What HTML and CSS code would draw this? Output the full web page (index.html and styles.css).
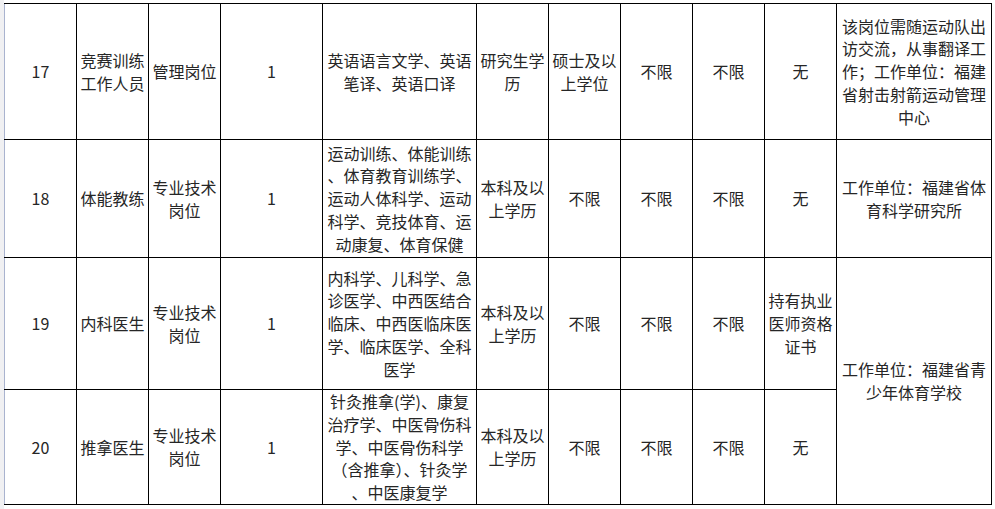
FILE: index.html
```html
<!DOCTYPE html>
<html lang="zh-CN">
<head>
<meta charset="utf-8">
<title>岗位表</title>
<link rel="stylesheet" href="styles.css">
</head>
<body>
<div class="page">
  <div class="gutter"></div>
  <table class="jobs">
    <colgroup>
      <col class="c-num"><col class="c-name"><col class="c-type"><col class="c-count">
      <col class="c-major"><col class="c-edu"><col class="c-deg"><col class="c-a">
      <col class="c-b"><col class="c-c"><col class="c-note">
    </colgroup>
    <tbody>
      <tr class="r17">
        <td class="first">17</td>
        <td>竞赛训练<br>工作人员</td>
        <td>管理岗位</td>
        <td>1</td>
        <td>英语语言文学、英语<br>笔译、英语口译</td>
        <td>研究生学<br>历</td>
        <td>硕士及以<br>上学位</td>
        <td>不限</td>
        <td>不限</td>
        <td>无</td>
        <td>该岗位需随运动队出<br>访交流，从事翻译工<br>作；工作单位：福建<br>省射击射箭运动管理<br>中心</td>
      </tr>
      <tr class="r18">
        <td class="first">18</td>
        <td>体能教练</td>
        <td>专业技术<br>岗位</td>
        <td>1</td>
        <td>运动训练、体能训练<br>、体育教育训练学、<br>运动人体科学、运动<br>科学、竞技体育、运<br>动康复、体育保健</td>
        <td>本科及以<br>上学历</td>
        <td>不限</td>
        <td>不限</td>
        <td>不限</td>
        <td>无</td>
        <td>工作单位：福建省体<br>育科学研究所</td>
      </tr>
      <tr class="r19">
        <td class="first">19</td>
        <td>内科医生</td>
        <td>专业技术<br>岗位</td>
        <td>1</td>
        <td>内科学、儿科学、急<br>诊医学、中西医结合<br>临床、中西医临床医<br>学、临床医学、全科<br>医学</td>
        <td>本科及以<br>上学历</td>
        <td>不限</td>
        <td>不限</td>
        <td>不限</td>
        <td>持有执业<br>医师资格<br>证书</td>
        <td rowspan="2">工作单位：福建省青<br>少年体育学校</td>
      </tr>
      <tr class="r20">
        <td class="first">20</td>
        <td>推拿医生</td>
        <td>专业技术<br>岗位</td>
        <td>1</td>
        <td>针灸推拿(学)、康复<br>治疗学、中医骨伤科<br>学、中医骨伤科学<br>（含推拿）、针灸学<br>、中医康复学</td>
        <td>本科及以<br>上学历</td>
        <td>不限</td>
        <td>不限</td>
        <td>不限</td>
        <td>无</td>
      </tr>
    </tbody>
  </table>
</div>
</body>
</html>
```
FILE: styles.css
```css
html, body {
  margin: 0;
  padding: 0;
  background: #ffffff;
}

.page {
  display: flex;
  align-items: flex-start;
  padding-top: 3px;
  height: 506px;
  overflow: hidden;
  background: linear-gradient(to right, #f0f0f2 0, #f0f0f2 4px, #ffffff 4px);
}

.gutter {
  width: 4px;
  flex: none;
}

.jobs {
  border-collapse: collapse;
  table-layout: fixed;
  width: 988px;
  font-family: "Noto Sans CJK SC", "Microsoft YaHei", sans-serif;
  font-size: 16px;
  line-height: 22.8px;
  color: #262626;
}

.jobs td {
  border: 1px solid #000000;
  padding: 0 3px;
  text-align: center;
  vertical-align: middle;
  white-space: nowrap;
  overflow: hidden;
}

.jobs td.first {
  border-left: 1px solid #a9b3cf;
}

.c-num { width: 72px; }
.c-name { width: 72px; }
.c-type { width: 72px; }
.c-count { width: 102px; }
.c-major { width: 154px; }
.c-edu { width: 72px; }
.c-deg { width: 72px; }
.c-a { width: 72px; }
.c-b { width: 72px; }
.c-c { width: 72px; }
.c-note { width: 155px; }

.r17 { height: 136px; }
.r18 { height: 118px; }
.r19 { height: 132px; }
.r20 { height: 115px; }
```
